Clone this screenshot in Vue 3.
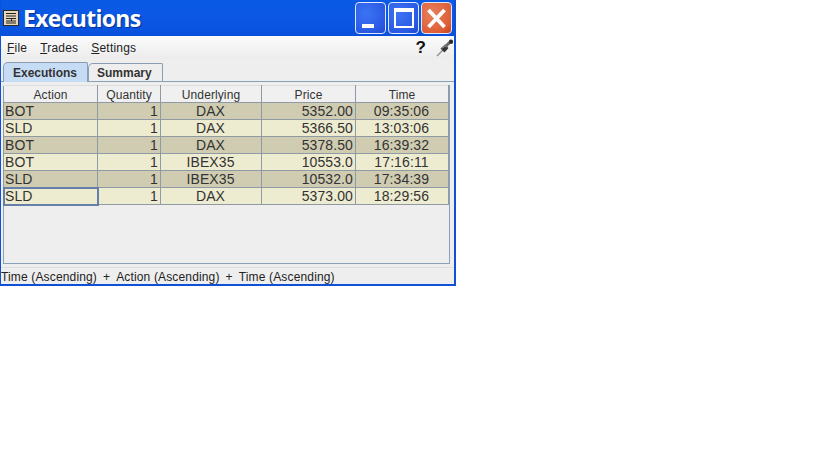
<script setup>
const columns = [
  { label: 'Action', key: 'action', align: 'left' },
  { label: 'Quantity', key: 'qty', align: 'right' },
  { label: 'Underlying', key: 'und', align: 'center' },
  { label: 'Price', key: 'price', align: 'right' },
  { label: 'Time', key: 'time', align: 'center' },
]
const rows = [
  { action: 'BOT', qty: 1, und: 'DAX', price: '5352.00', time: '09:35:06' },
  { action: 'SLD', qty: 1, und: 'DAX', price: '5366.50', time: '13:03:06' },
  { action: 'BOT', qty: 1, und: 'DAX', price: '5378.50', time: '16:39:32' },
  { action: 'BOT', qty: 1, und: 'IBEX35', price: '10553.0', time: '17:16:11' },
  { action: 'SLD', qty: 1, und: 'IBEX35', price: '10532.0', time: '17:34:39' },
  { action: 'SLD', qty: 1, und: 'DAX', price: '5373.00', time: '18:29:56' },
]
const sorts = ['Time (Ascending)', '+', 'Action (Ascending)', '+', 'Time (Ascending)']
</script>

<template>
  <div class="window">
    <header class="titlebar">
      <svg class="app-icon" width="16" height="16" viewBox="0 0 16 16">
        <rect x="0.5" y="0.5" width="15" height="15" fill="#e6d8b8" stroke="#2b2b20" />
        <path d="M3 3.5H13M3 6H13M3 8.5H13M3 11H13M3 13H13" stroke="#222" fill="none" />
        <path d="M8.5 8.5V11" stroke="#222" />
      </svg>
      <h1 class="title">Executions</h1>
      <div class="controls">
        <button class="ctl blue"><span class="min"></span></button>
        <button class="ctl blue"><span class="max"></span></button>
        <button class="ctl red">
          <svg width="23" height="23" viewBox="0 0 23 23"><path d="M3.5 3L19.5 20M19.5 3L3.5 20" stroke="#fff" stroke-width="3.8" /></svg>
        </button>
      </div>
    </header>

    <nav class="menubar">
      <span class="mi"><u>F</u>ile</span>
      <span class="mi"><u>T</u>rades</span>
      <span class="mi"><u>S</u>ettings</span>
      <span class="spacer"></span>
      <span class="help">?</span>
      <svg class="pin" width="18" height="18" viewBox="0 0 18 18">
        <path d="M1 17L7 11" stroke="#8a8a8a" stroke-width="1.3" />
        <path d="M4.5 9.5L8.5 13.5L12.5 9L9 5.5Z" fill="#333" />
        <path d="M9 8L13.5 3.5" stroke="#666" stroke-width="3" />
        <circle cx="15" cy="2.8" r="2.2" fill="#2c2c2c" />
        <path d="M6 9.5L9 6.5" stroke="#c8c8c8" />
      </svg>
    </nav>

    <div class="tabs">
      <div class="tab active">Executions</div>
      <div class="tab">Summary</div>
    </div>

    <section class="panel">
      <table class="grid">
        <colgroup>
          <col class="c1" /><col class="c2" /><col class="c3" /><col class="c4" /><col class="c5" />
        </colgroup>
        <thead>
          <tr><th v-for="c in columns" :key="c.key">{{ c.label }}</th></tr>
        </thead>
        <tbody>
          <tr v-for="(r, i) in rows" :key="i" :class="i % 2 ? 'light' : 'dark'">
            <td
              v-for="c in columns"
              :key="c.key"
              :class="[c.align, { focus: i === 5 && c.key === 'action' }]"
            >{{ r[c.key] }}</td>
          </tr>
        </tbody>
      </table>
    </section>

    <footer class="status">
      <span v-for="(s, i) in sorts" :key="i">{{ s }}</span>
    </footer>
  </div>
</template>

<style scoped>
.window {
  width: 456px;
  height: 286px;
  box-sizing: border-box;
  background: #eeeeee;
  border: solid #0f50d8;
  border-width: 0 2px 2px 1px;
  font-family: "Liberation Sans", Arial, sans-serif;
  display: flex;
  flex-direction: column;
  overflow: hidden;
}
.titlebar {
  height: 36px;
  margin: 0 -2px 0 -1px;
  flex: none;
  display: flex;
  align-items: center;
  padding: 0 4px 0 3px;
  background: linear-gradient(#0a5ae6 0, #0b57e4 60%, #0650dc 100%);
}
.app-icon { flex: none; margin-bottom: 1px; }
.title {
  margin: 0 0 0 4px;
  font: bold 23px "Open Sans", sans-serif;
  letter-spacing: -0.7px;
  color: #fff;
  text-shadow: 1px 1px 1px #0a2f90;
  line-height: 36px;
}
.controls { margin-left: auto; display: flex; gap: 2px; }
.ctl {
  width: 31px;
  height: 32px;
  padding: 0;
  box-sizing: border-box;
  border: 1px solid #dfe8fb;
  border-radius: 4px;
  position: relative;
  display: flex;
  align-items: center;
  justify-content: center;
}
.blue { background: radial-gradient(circle at 35% 35%, #3c74f4, #2a5ae4 70%, #1f48cf); }
.red { background: radial-gradient(circle at 35% 35%, #e8805c, #dd5f38 70%, #c7401c); }
.min {
  position: absolute;
  left: 6px;
  bottom: 5px;
  width: 12px;
  height: 4px;
  background: #fff;
}
.max {
  width: 20px;
  height: 20px;
  box-sizing: border-box;
  border: 2px solid #fff;
  border-top-width: 4px;
}
.menubar {
  height: 23px;
  flex: none;
  display: flex;
  align-items: center;
  padding: 0 0 0 6px;
  gap: 13px;
  font-size: 12px;
  color: #222;
  background: linear-gradient(#fbfbfb, #ececec);
  letter-spacing: 0.2px;
}
.spacer { flex: 1; }
.help { font: bold 17px "Liberation Sans", sans-serif; color: #111; margin-right: -3px; padding-top: 1px; }
.pin { flex: none; }
.tabs {
  height: 22px;
  flex: none;
  display: flex;
  align-items: flex-end;
  padding-left: 2px;
  border-bottom: 1px solid #8aa0b8;
}
.tab {
  box-sizing: border-box;
  width: 75px;
  height: 18px;
  line-height: 18px;
  padding-left: 8px;
  font-size: 12px;
  font-weight: bold;
  color: #333;
  background: #eeeeee;
  border: 1px solid #8a9db4;
  border-bottom: 0;
  border-radius: 5px 2px 0 0;
}
.tab.active {
  width: 85px;
  height: 20px;
  line-height: 20px;
  padding-left: 9px;
  background: #c6dcf4;
  margin-bottom: -1px;
  position: relative;
}
.panel {
  flex: 1;
  margin: 3px 4px 3px 2px;
  border: 1px solid #8aa0b8;
  border-top: 0;
  min-height: 0;
  background: #eeeeee;
}
.grid {
  table-layout: fixed;
  border-collapse: collapse;
  width: 446px;
  margin-left: -1px;
  font-size: 14px;
  color: #333;
}
.c1 { width: 94px; }
.c2 { width: 63px; }
.c3 { width: 101px; }
.c4 { width: 94px; }
.c5 { width: 93px; }
th {
  height: 16px;
  padding: 2px 0 0;
  box-sizing: border-box;
  font-size: 12px;
  font-weight: normal;
  color: #333;
  background: #f0f0f0;
  border: 1px solid #8f9aa4;
  border-top-color: #dddddd;
  letter-spacing: 0.1px;
}
td {
  height: 16px;
  padding: 0 2px 0 1px;
  border: 1px solid #8f9aa4;
  white-space: nowrap;
  overflow: hidden;
  line-height: 16px;
  letter-spacing: 0.1px;
}
.dark td { background: #d0ccb2; }
.light td { background: #eeecd0; }
.left { text-align: left; }
.right { text-align: right; }
.center { text-align: center; }
td.focus { outline: 2px solid #6480aa; outline-offset: -1px; }
.status {
  height: 17px;
  box-sizing: border-box;
  flex: none;
  display: flex;
  gap: 6px;
  padding: 1px 0 0 1px;
  margin-left: -1px;
  font-size: 12px;
  line-height: 16px;
  color: #222;
  white-space: nowrap;
  border-top: 1px solid #dddddd;
  letter-spacing: 0.15px;
}
</style>
